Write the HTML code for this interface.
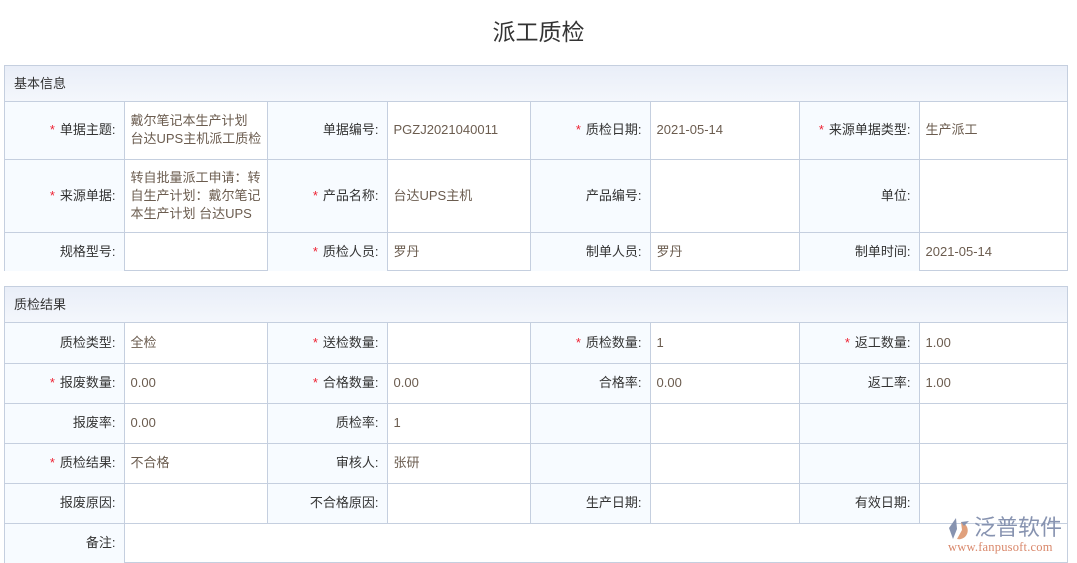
<!DOCTYPE html>
<html><head><meta charset="utf-8"><style>
body{margin:0;width:1077px;height:563px;background:#fff;font-family:"Liberation Sans","Noto Sans CJK SC",sans-serif;position:relative;overflow:hidden}
h1{position:absolute;top:13px;left:0;width:1077px;text-align:center;margin:0;font-size:23px;font-weight:normal;color:#333}
.sec{position:absolute;left:4px;width:1064px;border:1px solid #c5cfdf;box-sizing:border-box}
.hd{height:36px;line-height:35px;padding-left:9px;font-size:13px;color:#333;background:linear-gradient(#e9eef8,#f4f7fc);border-bottom:1px solid #c5cfdf;box-sizing:border-box}
table{border-collapse:collapse;table-layout:fixed;width:1062px}
td{border:1px solid #c5cfdf;font-size:13px;padding:0 6px;line-height:18px}
tr td:first-child{border-left:none}tr td:last-child{border-right:none}
tr:last-child td{border-bottom:none}tr:first-child td{border-top:none}
td.l{background:#f7fbff;text-align:right;color:#333;padding-right:8px}
td.v{color:#6b5c4f}
td.nw{white-space:nowrap;padding-right:0;overflow:hidden}
.r{color:#e23;margin-right:5px}
</style></head><body>
<h1>派工质检</h1>
<div class="sec" style="top:65px;height:206px">
<div class="hd">基本信息</div>
<table><colgroup><col style="width:119px"><col style="width:143px"><col style="width:120px"><col style="width:143px"><col style="width:120px"><col style="width:149px"><col style="width:120px"><col></colgroup>
<tr style="height:57px"><td class="l"><span class="r">*</span>单据主题:</td><td class="v nw">戴尔笔记本生产计划<br>台达UPS主机派工质检</td><td class="l">单据编号:</td><td class="v">PGZJ2021040011</td><td class="l"><span class="r">*</span>质检日期:</td><td class="v">2021-05-14</td><td class="l"><span class="r">*</span>来源单据类型:</td><td class="v">生产派工</td></tr>
<tr style="height:73px"><td class="l"><span class="r">*</span>来源单据:</td><td class="v nw">转自批量派工申请：转<br>自生产计划：戴尔笔记<br>本生产计划 台达UPS</td><td class="l"><span class="r">*</span>产品名称:</td><td class="v">台达UPS主机</td><td class="l">产品编号:</td><td class="v"></td><td class="l">单位:</td><td class="v"></td></tr>
<tr style="height:39px"><td class="l">规格型号:</td><td class="v"></td><td class="l"><span class="r">*</span>质检人员:</td><td class="v">罗丹</td><td class="l">制单人员:</td><td class="v">罗丹</td><td class="l">制单时间:</td><td class="v">2021-05-14</td></tr>
</table></div>
<div class="sec" style="top:286px;height:277px">
<div class="hd">质检结果</div>
<table><colgroup><col style="width:119px"><col style="width:143px"><col style="width:120px"><col style="width:143px"><col style="width:120px"><col style="width:149px"><col style="width:120px"><col></colgroup>
<tr style="height:40px"><td class="l">质检类型:</td><td class="v">全检</td><td class="l"><span class="r">*</span>送检数量:</td><td class="v"></td><td class="l"><span class="r">*</span>质检数量:</td><td class="v">1</td><td class="l"><span class="r">*</span>返工数量:</td><td class="v">1.00</td></tr>
<tr style="height:40px"><td class="l"><span class="r">*</span>报废数量:</td><td class="v">0.00</td><td class="l"><span class="r">*</span>合格数量:</td><td class="v">0.00</td><td class="l">合格率:</td><td class="v">0.00</td><td class="l">返工率:</td><td class="v">1.00</td></tr>
<tr style="height:40px"><td class="l">报废率:</td><td class="v">0.00</td><td class="l">质检率:</td><td class="v">1</td><td class="l"></td><td class="v"></td><td class="l"></td><td class="v"></td></tr>
<tr style="height:40px"><td class="l"><span class="r">*</span>质检结果:</td><td class="v">不合格</td><td class="l">审核人:</td><td class="v">张研</td><td class="l"></td><td class="v"></td><td class="l"></td><td class="v"></td></tr>
<tr style="height:40px"><td class="l">报废原因:</td><td class="v"></td><td class="l">不合格原因:</td><td class="v"></td><td class="l">生产日期:</td><td class="v"></td><td class="l">有效日期:</td><td class="v"></td></tr>
<tr style="height:40px"><td class="l">备注:</td><td class="v" colspan="7"></td></tr>
</table></div>
<div style="position:absolute;left:947px;top:517px;width:26px;height:24px">
<svg width="26" height="24" viewBox="0 0 26 24"><path d="M9 1 L2 11 L6 22 L10 12 Z" fill="#8793b0"/><path d="M14 5 A8 8 0 1 1 10 22 L15 13 Z" fill="#e0a07c"/><path d="M14 5 L22 4 L17 9 Z" fill="#8793b0"/></svg></div>
<div style="position:absolute;left:974px;top:515px;font-size:22px;color:#8793b0;letter-spacing:0;line-height:26px">泛普软件</div>
<div style="position:absolute;left:948px;top:540px;font-family:'Liberation Serif',serif;font-size:12.5px;color:#d9876a;letter-spacing:0.2px;line-height:14px">www.fanpusoft.com</div>
</body></html>
